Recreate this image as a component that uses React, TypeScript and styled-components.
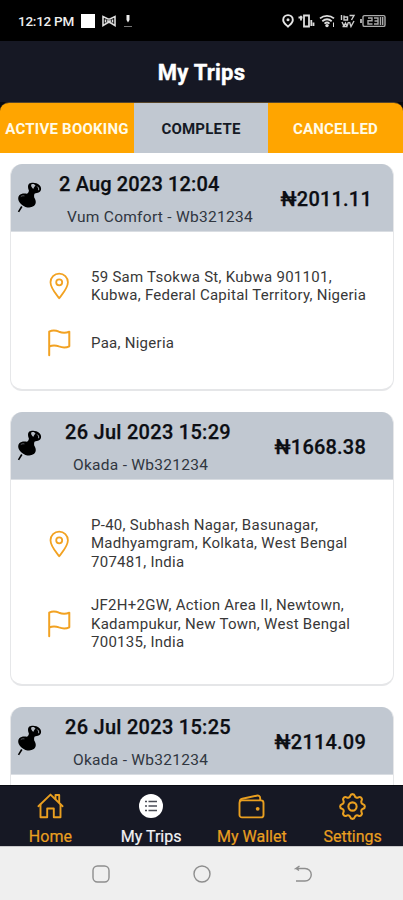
import React from "react";
import styled, { createGlobalStyle } from "styled-components";
import { TbSettings } from "react-icons/tb";

const ORANGE = "#ffa500";
const NAVY = "#161824";
const SILVER = "#c1c8d1";

const GlobalStyle = createGlobalStyle`
  * { box-sizing: border-box; }
  body { margin: 0; background: #fff; font-family: Roboto, "Noto Sans", sans-serif; }
`;

const Screen = styled.div`
  width: 403px;
  height: 900px;
  overflow: hidden;
  display: flex;
  flex-direction: column;
  background: #fff;
`;

const StatusBar = styled.div`
  height: 41px;
  flex: none;
  background: #000;
  display: flex;
  align-items: center;
  justify-content: space-between;
  padding: 0 17px 0 18px;
`;

const StatusGroup = styled.div<{ $gap: number }>`
  display: flex;
  align-items: center;
  gap: ${(p) => p.$gap}px;
`;

const Clock = styled.span`
  color: #eee;
  font-size: 13.5px;
  font-weight: 500;
  line-height: 16px;
  letter-spacing: -0.25px;
  padding-top: 1px;
  white-space: nowrap;
`;

const TitleBar = styled.header`
  height: 61px;
  flex: none;
  background: ${NAVY};
  display: flex;
  align-items: center;
  justify-content: center;
  padding-top: 3px;
`;

const Title = styled.h1`
  margin: 0;
  color: #fff;
  font-size: 22px;
  line-height: 28px;
  font-weight: 700;
  letter-spacing: 0.2px;
  -webkit-text-stroke: 0.4px #fff;
`;

const TabStrip = styled.div`
  flex: none;
  height: 51px;
  background: #080a10;
`;

const Tabs = styled.div`
  height: 51px;
  display: grid;
  grid-template-columns: 134px 134px 135px;
  border-radius: 9px 9px 0 0;
  overflow: hidden;
  border-top: 1px solid #57452a;
`;

const Tab = styled.button<{ $active?: boolean }>`
  border: 0;
  padding: 2px 0 0;
  font: 700 15px/18px Roboto, sans-serif;
  white-space: nowrap;
  letter-spacing: 0.22px;
  color: ${(p) => (p.$active ? "#151a25" : "#fffbe8")};
  background: ${(p) => (p.$active ? SILVER : ORANGE)};
`;

const TripList = styled.main`
  flex: 1;
  min-height: 0;
  overflow: hidden;
  padding: 11px 9px 0 10px;
  display: flex;
  flex-direction: column;
  gap: 21px;
`;

const Card = styled.article<{ $height: number }>`
  flex: none;
  height: ${(p) => p.$height}px;
  border: 1px solid #e6e7e9;
  border-top: 0;
  border-bottom: 2px solid #e5e6e8;
  border-radius: 12px;
  background: #fff;
  overflow: hidden;
`;

const CardHeader = styled.div`
  height: 68px;
  margin: 0 -1px;
  background: ${SILVER};
  border-bottom: 1px solid #d9dde2;
  display: flex;
`;

const PinCell = styled.div`
  width: 38px;
  flex: none;
  padding: 18px 0 0 7px;
`;

const TripMeta = styled.div<{ $indent: number }>`
  flex: 1;
  padding: 8px 0 0 ${(p) => p.$indent}px;
  white-space: nowrap;
`;

const TripDate = styled.div<{ $tight: boolean }>`
  font-size: 20px;
  line-height: 24px;
  font-weight: 500;
  letter-spacing: ${(p) => (p.$tight ? 0.15 : 0.28)}px;
  color: #0c0e13;
  -webkit-text-stroke: 0.25px #0c0e13;
`;

const Vehicle = styled.div`
  padding: 9px 0 0 8px;
  font-size: 15.5px;
  line-height: 24px;
  letter-spacing: 0.28px;
  color: #303640;
`;

const Price = styled.div<{ $right: number }>`
  flex: none;
  padding: 23px ${(p) => p.$right}px 0 0;
  font-size: 20px;
  line-height: 24px;
  font-weight: 500;
  letter-spacing: 0.2px;
  color: #0c0e13;
  -webkit-text-stroke: 0.25px #0c0e13;
`;

const Stops = styled.div<{ $gap: number }>`
  display: flex;
  flex-direction: column;
  gap: ${(p) => p.$gap}px;
  padding-top: 36px;
`;

const Stop = styled.div`
  display: grid;
  grid-template-columns: 32px 1fr;
  column-gap: 16px;
  align-items: center;
  padding-left: 32px;
`;

const StopIcon = styled.span`
  display: flex;
  justify-content: center;
`;

const Address = styled.p`
  margin: 0;
  font-size: 15px;
  line-height: 18.4px;
  letter-spacing: 0.27px;
  color: #383838;
  white-space: pre;
`;

const BottomNav = styled.nav`
  flex: none;
  height: 61px;
  background: ${NAVY};
  border-top: 1px solid #090b12;
  display: grid;
  grid-template-columns: repeat(4, 1fr);
`;

const NavItem = styled.a<{ $active?: boolean }>`
  display: flex;
  flex-direction: column;
  align-items: center;
  padding-top: 6px;
  gap: 7px;
  color: ${(p) => (p.$active ? "#f2f2f4" : "#e99f20")};
  font-size: 16px;
  line-height: 20px;
  white-space: nowrap;
  -webkit-text-stroke: 0.2px currentColor;
`;

const NavGlyph = styled.span`
  display: flex;
  height: 28px;
  align-items: center;
`;

const SystemBar = styled.footer`
  flex: none;
  height: 54px;
  background: #efefef;
  border-top: 1px solid #c9c9cb;
  display: flex;
  justify-content: center;
  align-items: center;
  gap: 83px;
`;

const PushPin = () => (
  <svg width="26" height="33" viewBox="0 0 26 33" fill="#000">
    <path d="M4.8 24.500 1.500 29.800" stroke="#000" strokeWidth="1.600" />
    <path d="M12.300 1.600C14.500.1 19.700.3 22.300 3c2.700 2.700 2.200 6-.2 7.200-1.600.8-3.100.7-4.300 1.300-.9.800-.8 2.800-.5 4.300 1.900 2.700 2.200 6.300-.5 8.300-3.400 2.400-8.400 1.500-11.700-1.200-3.900-2.900-4.900-7-2.800-9.600 1.700-2.100 5.100-2.100 7.600-1.600 1.100-.5 2-1.900 2-3.200-.9-1.900-1.500-5.400.4-6.900Z" />
    <path d="M14.500 2.200c1.600-.7 3.300-.1 4 1.300-.9.800-1.600 1.800-2 3.300-1.600-.9-3.100-3.400-2-4.600Z" fill="#b4bac2" />
    <path d="M20.300 4.600c1.200 1 1.700 2.200 1.200 3.600" stroke="#b4bac2" strokeWidth="1" fill="none" />
    <path d="M3.800 14.600c1-.8 2.300-1 3.600-.7" stroke="#878d95" strokeWidth=".7" fill="none" />
  </svg>
);

const LocationIcon = () => (
  <svg width="24" height="28" viewBox="0 0 24 28" fill="none" stroke="#f2a222" strokeWidth="1.800" strokeLinejoin="round">
    <path d="M12.200 26.200C9.500 22.500 3.500 16.500 3.500 10.300a8.700 8.700 0 0 1 17.400 0c0 6.200-6 12.200-8.700 15.900Z" />
    <circle cx="12.200" cy="10.300" r="3" />
  </svg>
);

const FlagIcon = () => (
  <svg width="24" height="28" viewBox="0 0 24 28" fill="none" stroke="#f2a222" strokeWidth="2" strokeLinecap="round" strokeLinejoin="round">
    <path d="M2.200 26.200V2.700c2.700-1.400 6-1.600 9.800 0 3.800 1.500 7 1.300 10.300 0v14.600c-3.300 1.500-6.500 1.500-10.300.1-3.800-1.500-7.100-1.200-9.800.1" />
  </svg>
);

const HomeIcon = () => (
  <svg width="27" height="26" viewBox="0 0 27 26" fill="none" stroke="currentColor" strokeWidth="1.900" strokeLinecap="round" strokeLinejoin="round">
    <path d="M1.400 13.200 13.500 1.600l12.100 11.600" />
    <path d="M18.500 6V2h3.700v7.500" />
    <path d="M3.500 11.500v12.700h6.700v-8.700h6.600v8.700h6.700V11.500" />
  </svg>
);

const ListIcon = () => (
  <svg width="24" height="24" viewBox="0 0 24 24">
    <circle cx="12" cy="12" r="12" fill="#fff" />
    <path d="M6 7.500h2M6 12h2M6 16.500h2M9.500 7.500H18M9.500 12H18M9.500 16.500H18" stroke="#4a4c55" strokeWidth="1.600" />
  </svg>
);

const WalletIcon = () => (
  <svg width="27" height="25" viewBox="0 0 27 25" fill="none" stroke="currentColor" strokeWidth="1.900" strokeLinejoin="round">
    <rect x="1.500" y="6.400" width="24" height="17" rx="2.500" />
    <path d="M1.800 7.500c.1-1.700 1.100-2.400 2.500-2.700L18.500 1.700c2.200-.5 3.700.6 3.700 2.500v2" />
    <circle cx="19.700" cy="14.800" r="1.900" fill="currentColor" stroke="none" />
  </svg>
);

const StatusIcons = () => (
  <StatusGroup $gap={4}>
    <svg width="12" height="14" viewBox="0 0 12 14" fill="none" stroke="#e6e6e6" strokeWidth="1.900">
      <path d="M6 12.600C4 10.700 1.200 8.800 1.200 5.900a4.800 4.800 0 0 1 9.600 0c0 2.900-2.800 4.800-4.800 6.700Z" />
      <circle cx="6" cy="5.800" r="1.500" fill="#ddd" stroke="none" />
    </svg>
    <svg width="17" height="14" viewBox="0 0 17 14" fill="none" stroke="#ddd" strokeWidth="1.800">
      <path d="M6 1.500h5v11H6zM.5 3.500h4M3 1.800v4.600M13.300 6v6M15.500 8.500v3.600" />
    </svg>
    <svg width="17" height="14" viewBox="0 0 17 14" fill="none" stroke="#ddd" strokeWidth="1.800">
      <path d="M1 4.400c4-3.500 10-3.500 14 0M3.300 7.200c3-2.400 6.500-2.400 9.400 0M5.500 9.600c1.600-1.300 3.500-1.300 5 0" />
      <circle cx="8" cy="11.600" r="1.700" fill="#ddd" stroke="none" />
      <path d="M14.500 8.500v4.500" strokeWidth="1" />
    </svg>
    <svg width="16" height="14" viewBox="0 0 16 14" fill="none" stroke="#ccc" strokeWidth="1.400">
      <path d="M1.500 1v5M4 1.500v4.500h3.500V3H4M9.500 1.500H14L11.500 6M2 8l2 4 1.500-3L7 12l1.500-4M2.500 12.500h5M9.500 8l1.500 4.500L14 7" />
    </svg>
    <svg width="26" height="14" viewBox="0 0 26 14" fill="none" stroke="#aaa" strokeWidth="1.400">
      <rect x="3" y="1.600" width="22" height="10.800" rx="1.500" />
      <path d="M1 5v4" strokeWidth="2" />
      <path d="M8 4h4v2.800H8V10h4.500M14 4h4v6h-4M14.500 7H18M20.500 3v8M22.700 3v8" />
    </svg>
  </StatusGroup>
);

type Trip = {
  date: string;
  vehicle: string;
  price: string;
  indent: number;
  right: number;
  height: number;
  gap: number;
  from: string;
  to: string;
};

const trips: Trip[] = [
  {
    date: "2 Aug 2023 12:04",
    vehicle: "Vum Comfort - Wb321234",
    price: "₦2011.11",
    indent: 11,
    right: 22,
    height: 227,
    gap: 24,
    from: "59 Sam Tsokwa St, Kubwa 901101,\nKubwa, Federal Capital Territory, Nigeria",
    to: "Paa, Nigeria",
  },
  {
    date: "26 Jul 2023 15:29",
    vehicle: "Okada - Wb321234",
    price: "₦1668.38",
    indent: 17,
    right: 28,
    height: 274,
    gap: 25,
    from: "P-40, Subhash Nagar, Basunagar,\nMadhyamgram, Kolkata, West Bengal\n707481, India",
    to: "JF2H+2GW, Action Area II, Newtown,\nKadampukur, New Town, West Bengal\n700135, India",
  },
  {
    date: "26 Jul 2023 15:25",
    vehicle: "Okada - Wb321234",
    price: "₦2114.09",
    indent: 17,
    right: 28,
    height: 274,
    gap: 25,
    from: "",
    to: "",
  },
];

const TripCard = ({ trip }: { trip: Trip }) => (
  <Card $height={trip.height}>
    <CardHeader>
      <PinCell>
        <PushPin />
      </PinCell>
      <TripMeta $indent={trip.indent}>
        <TripDate $tight={trip.indent < 15}>{trip.date}</TripDate>
        <Vehicle>{trip.vehicle}</Vehicle>
      </TripMeta>
      <Price $right={trip.right}>{trip.price}</Price>
    </CardHeader>
    {trip.from && (
      <Stops $gap={trip.gap}>
        <Stop>
          <StopIcon>
            <LocationIcon />
          </StopIcon>
          <Address>{trip.from}</Address>
        </Stop>
        <Stop>
          <StopIcon>
            <FlagIcon />
          </StopIcon>
          <Address>{trip.to}</Address>
        </Stop>
      </Stops>
    )}
  </Card>
);

export default function App() {
  return (
    <>
      <GlobalStyle />
      <Screen>
        <StatusBar>
          <StatusGroup $gap={7}>
            <Clock>12:12 PM</Clock>
            <svg width="14" height="14">
              <rect width="14" height="14" fill="#fff" />
            </svg>
            <svg width="14" height="12" viewBox="0 0 14 12" fill="none" stroke="#ddd" strokeWidth="1.600">
              <path d="M1 1.500v9l5-3h2l5 3v-9L8 4H6L1 1.500ZM3.500 4.500v3M10.500 4.500v3M5 6h4" />
            </svg>
            <svg width="10" height="14" viewBox="0 0 10 14">
              <path d="M3.500 1h3v5L5 8.500 3.500 6Z" fill="#eee" />
              <path d="M1 12.500h8" stroke="#777" />
            </svg>
          </StatusGroup>
          <StatusIcons />
        </StatusBar>
        <TitleBar>
          <Title>My Trips</Title>
        </TitleBar>
        <TabStrip>
          <Tabs>
            <Tab>ACTIVE BOOKING</Tab>
            <Tab $active>COMPLETE</Tab>
            <Tab>CANCELLED</Tab>
          </Tabs>
        </TabStrip>
        <TripList>
          {trips.map((t) => (
            <TripCard key={t.date} trip={t} />
          ))}
        </TripList>
        <BottomNav>
          <NavItem>
            <NavGlyph>
              <HomeIcon />
            </NavGlyph>
            Home
          </NavItem>
          <NavItem $active>
            <NavGlyph>
              <ListIcon />
            </NavGlyph>
            My Trips
          </NavItem>
          <NavItem>
            <NavGlyph>
              <WalletIcon />
            </NavGlyph>
            My Wallet
          </NavItem>
          <NavItem>
            <NavGlyph>
              <TbSettings size={33} strokeWidth={1.5} />
            </NavGlyph>
            Settings
          </NavItem>
        </BottomNav>
        <SystemBar>
          <svg width="18" height="18" viewBox="0 0 18 18" fill="none" stroke="#8e8e8e" strokeWidth="1.400">
            <rect x="1" y="1" width="16" height="16" rx="4.500" />
          </svg>
          <svg width="18" height="18" viewBox="0 0 18 18" fill="none" stroke="#8e8e8e" strokeWidth="1.400">
            <circle cx="9" cy="9" r="8" />
          </svg>
          <svg width="18" height="18" viewBox="0 0 18 18" fill="none" stroke="#8e8e8e" strokeWidth="1.400">
            <path d="M5.500 1 2 3.500h9a6 6 0 0 1 0 12.500H2M2 3.500l3 2" />
          </svg>
        </SystemBar>
      </Screen>
    </>
  );
}
